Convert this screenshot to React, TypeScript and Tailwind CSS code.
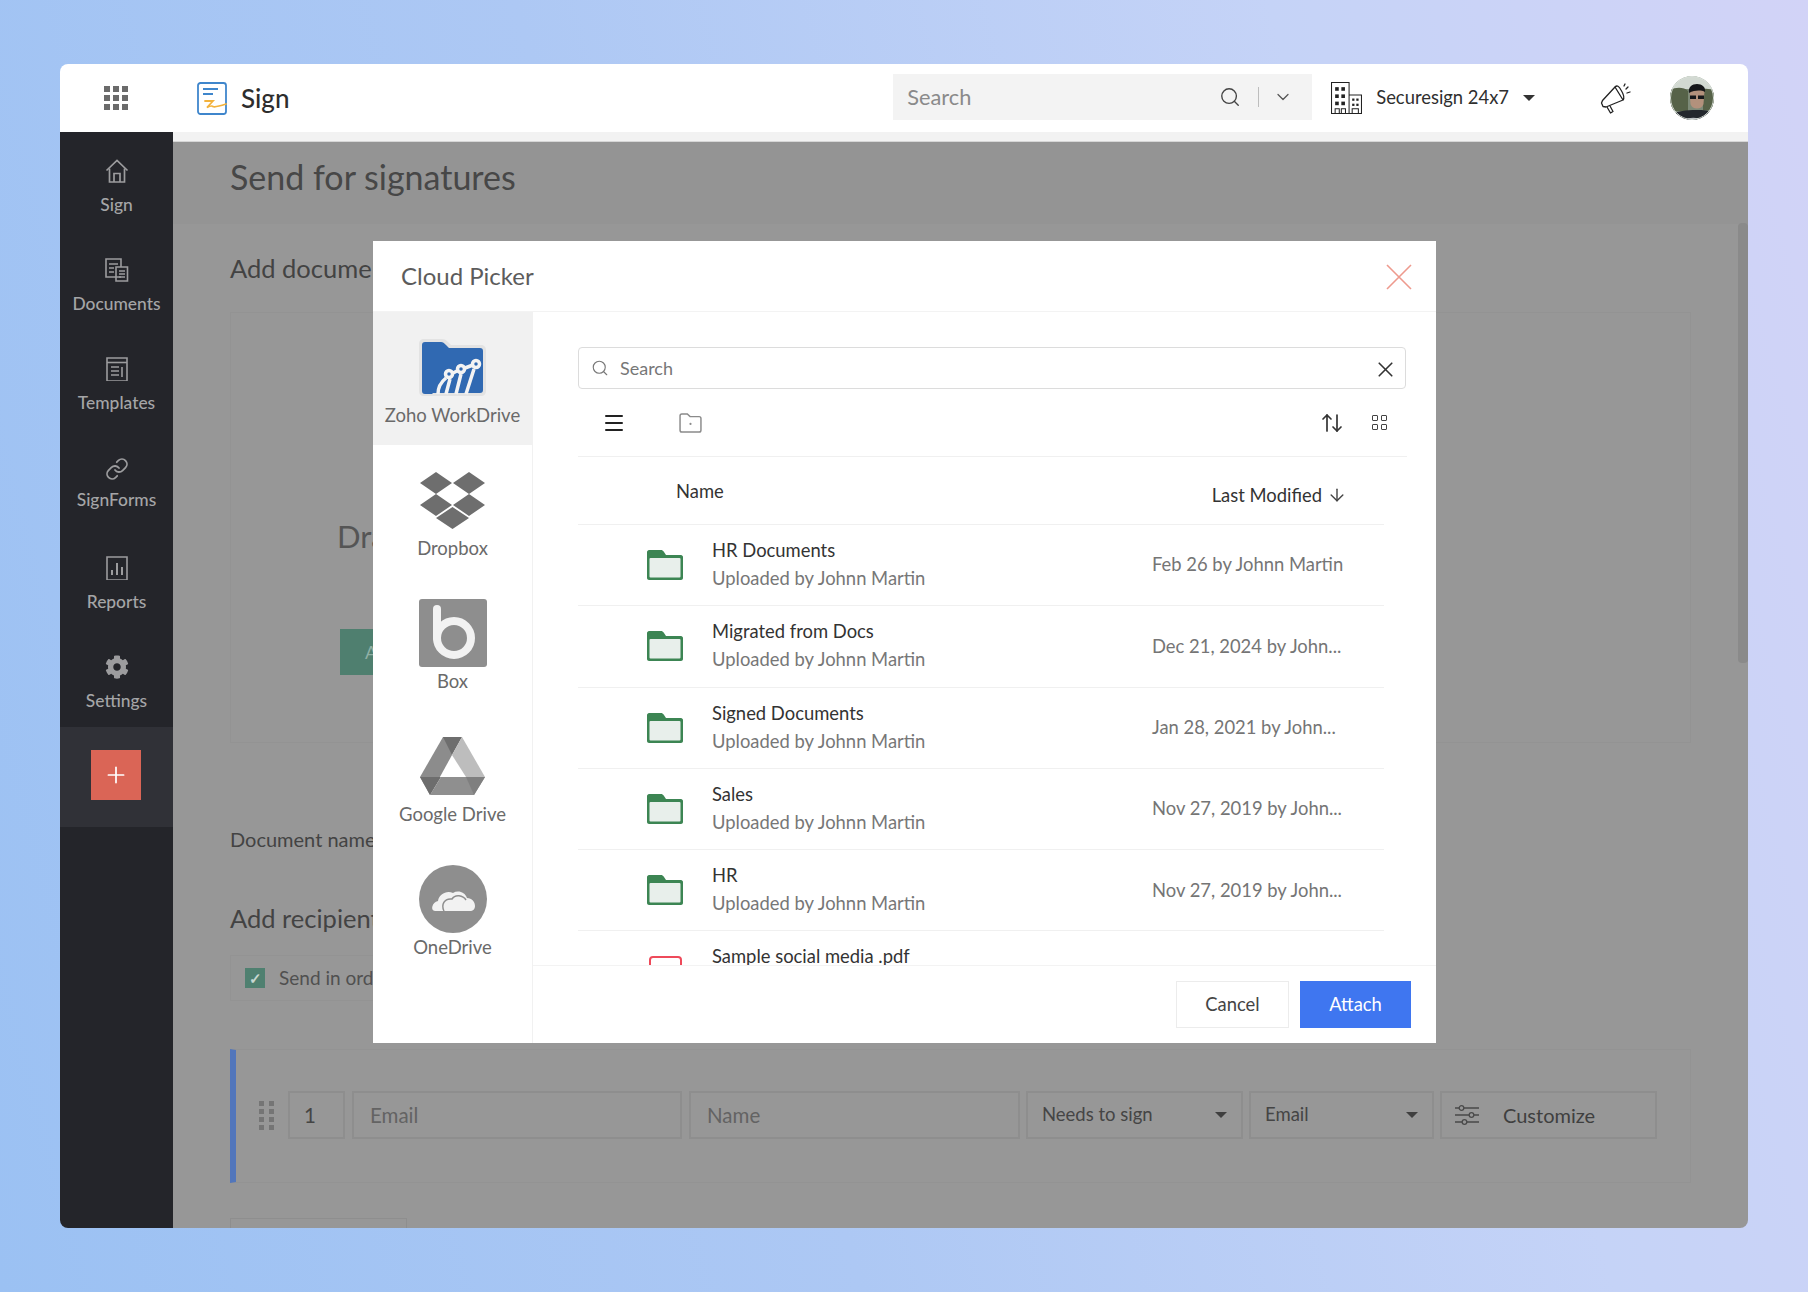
import { ChevronDown, Link, Search, X, Menu, ArrowUpDown, ArrowDown, Plus } from "lucide-react";
import { FaCog } from "react-icons/fa";

const sideIcon = "h-6 w-6 text-[#9c9c9e]";

function HomeIcon() {
  return (
    <svg viewBox="0 0 24 24" fill="none" stroke="currentColor" strokeWidth="1.7" className={sideIcon}>
      <path d="M1.500 11.500 12 1.500l10.500 10" />
      <path d="M4.500 9.500V23h15V9.500" />
      <path d="M9 23v-8.500h6V23" />
    </svg>
  );
}

function DocsIcon() {
  return (
    <svg viewBox="0 0 24 24" fill="none" stroke="currentColor" strokeWidth="1.600" className={sideIcon}>
      <path d="M16 19H1V1h15v8" />
      <path d="M11 9h11.500v14H11z" />
      <path d="M4 6h9M4 10h5M4 14h5M14 13h6M14 16h6M14 19h6" />
    </svg>
  );
}

function TemplateIcon() {
  return (
    <svg viewBox="0 0 24 24" fill="none" stroke="currentColor" strokeWidth="1.600" className={sideIcon}>
      <path d="M2 1h20v23H2z" />
      <path d="M2 5.500h20" />
      <path d="M6 10h8M6 14h8M6 18h8M17 10v10" />
    </svg>
  );
}

function ReportIcon() {
  return (
    <svg viewBox="0 0 24 24" fill="none" stroke="currentColor" strokeWidth="1.600" className={sideIcon}>
      <path d="M2 1h20v23H2z" />
      <path d="M7 19v-5M12 19V7M17 19v-8" strokeWidth="2" />
    </svg>
  );
}

function SignLogo() {
  return (
    <svg viewBox="0 0 30 33" className="h-[33px] w-[30px]" fill="none">
      <rect x="1" y="1" width="28" height="31" rx="2.500" stroke="#3f86cc" strokeWidth="1.800" fill="#fff" />
      <path d="M6 7h15M6 12h10" stroke="#3f86cc" strokeWidth="1.800" />
      <path d="M8 19h8l-6 6.500c3-1.500 5-2 6-1 2 1 7-.5 13-2.500" stroke="#f3b23c" strokeWidth="1.800" strokeLinecap="round" />
    </svg>
  );
}

function BuildingIcon() {
  return (
    <svg viewBox="0 0 30 31" className="h-[32px] w-[31px]" fill="none" stroke="#222" strokeWidth="1">
      <path d="M.5.500h17v30H.500zM17.500 12.500h12v18h-12zM0 30.500h30" />
      <path d="M4 26h4v4.500H4zM10 26h4v4.500h-4zM20.500 26h6v4.500h-6z" />
      <g fill="#222" stroke="none">
        <rect x="4" y="5" width="3.500" height="3.500" />
        <rect x="10" y="5" width="3.500" height="3.500" />
        <rect x="4" y="12" width="3.500" height="3.500" />
        <rect x="10" y="12" width="3.500" height="3.500" />
        <rect x="4" y="19" width="3.500" height="3.500" />
        <rect x="10" y="19" width="3.500" height="3.500" />
        <rect x="20.500" y="16" width="2.200" height="2.200" />
        <rect x="24.500" y="16" width="2.200" height="2.200" />
        <rect x="20.500" y="21" width="2.200" height="2.200" />
        <rect x="24.500" y="21" width="2.200" height="2.200" />
      </g>
    </svg>
  );
}

function MegaphoneIcon() {
  return (
    <svg viewBox="0 0 31 31" className="h-[31px] w-[31px]" fill="none" stroke="#222" strokeWidth="1.300" strokeLinejoin="round">
      <path d="M15 4 23 17 6 24l-3-.5L1.500 20l1-2.500z" />
      <path d="M15 4c2-2 4-1 6 3 2.500 4 3.500 8 2 10" />
      <path d="m7 24 3.500 6 2.500-1.500-3-5.500" />
      <path d="m26 6 2-2M27 10l3-1M24 3l1-2" strokeLinecap="round" />
    </svg>
  );
}

function Avatar() {
  return (
    <svg viewBox="0 0 44 44" className="h-11 w-11 rounded-full">
      <rect width="44" height="44" fill="#7d8a78" />
      <rect width="44" height="13" fill="#d2d9d2" />
      <path d="M0 14c6-3 14-3 18 1v20H0zM33 13c4-1 8 0 11 3v18H33z" fill="#566248" />
      <path d="M3 44v-6c5-3 12-4 24-4s14 1 17 4v6z" fill="#23272d" />
      <path d="M15 44c2-3 14-3 18 0z" fill="#b9bec2" />
      <path d="M19.500 15c0-4 4-6 7.500-6s7.500 2 7.500 6l-1 13c-1.500 6-11.500 6-13 0z" fill="#b3917c" />
      <path d="M19 17c-1-6 3-9 8-9s9 3 8 8c-4-2-10-2-16 1z" fill="#15171a" />
      <path d="M20 19.500h6V23h-6zM28 19.500h6V23h-6z" fill="#16181b" />
      <circle cx="22" cy="22" r="21.500" fill="none" stroke="#d9dfd9" strokeWidth="1" />
    </svg>
  );
}

function WorkDriveIcon() {
  return (
    <svg viewBox="0 0 67 57" className="h-[57px] w-[67px]">
      <path d="M5 0h18c3 0 4 1 6 3l3 3h30c3 0 5 2 5 5v41c0 3-2 5-5 5H5c-3 0-5-2-5-5V5c0-3 2-5 5-5z" fill="#e3e3e3" />
      <path d="M6 3h16c2 0 3 1 5 3l3 3h31c2 0 3 1 3 3v39c0 2-1 3-3 3H14l-1 1H6c-2 0-3-1-3-3V6c0-2 1-3 3-3z" fill="#3069b2" />
      <g fill="none" stroke="#f3f3f3" strokeWidth="3.500">
        <circle cx="30" cy="35" r="3.500" />
        <circle cx="42" cy="30" r="3.500" />
        <circle cx="57" cy="25" r="3.500" />
        <path d="M19 55c0-7 3-12 8-16M31 40l-4 15M42 35l-5 20M55 30l-8 25M34 34l5-2.500M46 29l8-3" />
      </g>
    </svg>
  );
}

function DropboxIcon() {
  return (
    <svg viewBox="0 0 65 57" className="h-[57px] w-[65px]" fill="#6e6e6e">
      <path d="M0 11 16 0l16 11-16 11zM33 11 49 0l16 11-16 11zM0 33l16-11 16 11-16 11zM33 33l16-11 16 11-16 11zM16 46l16.500-11L49 46 32.500 57z" />
    </svg>
  );
}

function BoxIcon() {
  return (
    <svg viewBox="0 0 68 68" className="h-[68px] w-[68px]">
      <rect width="68" height="68" rx="3" fill="#8e8e8e" />
      <g fill="none" stroke="#f2f2f2" strokeWidth="8" strokeLinecap="round">
        <path d="M18 10v29" />
        <circle cx="35" cy="39" r="17" />
      </g>
    </svg>
  );
}

function DriveIcon() {
  return (
    <svg viewBox="0 0 65 58" className="h-[58px] w-[65px]">
      <path d="M23 0h19l-10 18-9-3z" fill="#6e6e6e" />
      <path d="M42 0l23 40H46L32 18z" fill="#bdbdbd" />
      <path d="M23 0 0 40l10 18 22-40z" fill="#8c8c8c" />
      <path d="M0 40h21L10 58z" fill="#6d6d6d" />
      <path d="M21 40h44L54 58H10z" fill="#8f8f8f" />
      <path d="M46 40h19l-11 18-8-18z" fill="#7f7f7f" />
    </svg>
  );
}

function OneDriveIcon() {
  return (
    <svg viewBox="0 0 68 68" className="h-[68px] w-[68px]">
      <circle cx="34" cy="34" r="34" fill="#8e8e8e" />
      <path d="M16 46c-5 0-3-9 3-10 1-7 9-11 15-8 5-3 12-1 14 5 5 0 8 4 8 8 0 3-2 5-5 5z" fill="#f2f2f2" />
      <path d="M25 46c-3-6 0-13 8-12 3-5 11-4 14 1" fill="none" stroke="#8e8e8e" strokeWidth="1.500" />
    </svg>
  );
}

function FolderIcon() {
  return (
    <svg viewBox="0 0 36 30" className="h-[30px] w-[36px]">
      <path d="M2 0h12c1 0 2 .5 3 2l2 3h15c1 0 2 1 2 2v21c0 1-1 2-2 2H2c-1 0-2-1-2-2V2C0 1 1 0 2 0z" fill="#3c8553" />
      <rect x="2.500" y="8" width="31" height="19.500" rx="1" fill="#e8efeb" />
    </svg>
  );
}

const sideItems = [
  { label: "Sign", icon: <HomeIcon /> },
  { label: "Documents", icon: <DocsIcon /> },
  { label: "Templates", icon: <TemplateIcon /> },
  { label: "SignForms", icon: <Link className={sideIcon} strokeWidth={1.8} />, textClass: "mt-[9px]" },
  { label: "Reports", icon: <ReportIcon /> },
  { label: "Settings", icon: <FaCog className={sideIcon} /> },
];

const providers = [
  { label: "Zoho WorkDrive", icon: <WorkDriveIcon />, active: true },
  { label: "Dropbox", icon: <DropboxIcon /> },
  { label: "Box", icon: <BoxIcon /> },
  { label: "Google Drive", icon: <DriveIcon /> },
  { label: "OneDrive", icon: <OneDriveIcon /> },
];

const files = [
  { name: "HR Documents", date: "Feb 26 by Johnn Martin" },
  { name: "Migrated from Docs", date: "Dec 21, 2024 by John..." },
  { name: "Signed Documents", date: "Jan 28, 2021 by John..." },
  { name: "Sales", date: "Nov 27, 2019 by John..." },
  { name: "HR", date: "Nov 27, 2019 by John..." },
];

function Caret({ className }: { className?: string }) {
  return <span className={`h-0 w-0 border-x-[6px] border-t-[6px] border-x-transparent ${className ?? ""}`} />;
}

export default function App() {
  return (
    <div className="h-[1292px] w-[1808px] overflow-hidden bg-[linear-gradient(75deg,#9bc1f3_0%,#adc8f4_40%,#c5d3f7_75%,#d2d3f7_100%)] pl-[60px] pt-[64px] font-['Lato','Liberation_Sans',sans-serif]">
      <div className="relative flex h-[1164px] w-[1688px] flex-col overflow-hidden rounded-lg">
        {/* Top bar */}
        <header className="flex h-[68px] shrink-0 items-center bg-white pr-[34px]">
          <div className="flex w-[111px] justify-center">
            <div className="grid grid-cols-3 gap-[3px]">
              {Array.from({ length: 9 }).map((_, i) => (
                <span key={i} className="h-[6px] w-[6px] bg-[#6b6b6b]" />
              ))}
            </div>
          </div>
          <div className="ml-[26px] flex items-center gap-[14px]">
            <SignLogo />
            <span className="text-[26px] font-medium leading-none text-[#2d2d2d]">Sign</span>
          </div>
          <div className="ml-auto flex h-[46px] w-[419px] -translate-y-[1px] items-center bg-[#f3f3f3] pl-[14px] pr-[19px] text-[21.800px] text-[#8a8a8a]">
            <span className="flex-1">Search</span>
            <Search className="h-[22px] w-[22px] text-[#444]" strokeWidth={1.5} />
            <span className="ml-[17px] h-[20px] w-px bg-[#bdbdbd]" />
            <ChevronDown className="ml-[14px] h-[20px] w-[20px] text-[#555]" strokeWidth={1.5} />
          </div>
          <div className="ml-[19px] flex items-center">
            <BuildingIcon />
            <span className="ml-[14px] text-[18.400px] text-[#2f2f2f]">Securesign 24x7</span>
            <Caret className="ml-[14px] border-t-[#333]" />
          </div>
          <div className="ml-[65px] flex items-center">
            <MegaphoneIcon />
          </div>
          <div className="ml-[39px]">
            <Avatar />
          </div>
        </header>

        <div className="flex min-h-0 flex-1">
          {/* Sidebar */}
          <aside className="w-[113px] shrink-0 bg-[#24252a]">
            {sideItems.map((item) => (
              <div key={item.label} className="flex h-[99.2px] flex-col items-center pt-[27px]">
                {item.icon}
                <span className={`${item.textClass ?? "mt-[12px]"} text-[17.400px] font-medium leading-[20px] text-[#a5a5a7]`}>{item.label}</span>
              </div>
            ))}
            <div className="flex h-[100px] items-center justify-center bg-[#303137] pb-[4px] pr-[1px]">
              <div className="flex h-[50px] w-[50px] items-center justify-center bg-[#da6556]">
                <Plus className="h-[26px] w-[26px] text-white" strokeWidth={1.6} />
              </div>
            </div>
          </aside>

          {/* Page behind the dialog */}
          <main className="relative flex min-w-0 flex-1 flex-col overflow-hidden bg-[#979797]">
            <div className="h-[10px] shrink-0 border-b border-[#d6d6d6] bg-[#f2f2f2]" />
            <div className="h-[82px] shrink-0 bg-[#949494] px-[57px] pt-[13px]">
              <h1 className="text-[34px] leading-[44px] text-[#474747]">Send for signatures</h1>
            </div>
            <div className="flex-1 px-[57px] pt-[28px]">
              <h2 className="text-[25.500px] leading-[32px] text-[#434343]">Add documents</h2>
              <div className="mt-[28px] h-[431px] border border-[#939393] pl-[106px] pt-[203px]">
                <p className="text-[31px] leading-[40px] text-[#555]">Drag and drop files</p>
                <div className="ml-[3px] mt-[73px] flex h-[46px] w-[120px] items-center bg-[#4f7f6f] pl-[25px] text-[18px] text-[#8fb0a5]">
                  Add
                </div>
              </div>
              <p className="mt-[84px] text-[20px] leading-[24px] text-[#434343]">Document name</p>
              <h2 className="mt-[51px] text-[25.500px] leading-[32px] text-[#434343]">Add recipients</h2>
              <div className="mt-[21px] flex h-[46px] w-[400px] items-center border border-[#939393] pl-[14px]">
                <span className="flex h-[20px] w-[20px] items-center justify-center bg-[#4f8070] text-[15px] font-bold leading-none text-[#c8d8d2]">✓</span>
                <span className="ml-[14px] text-[19px] text-[#505050]">Send in order</span>
              </div>
              <div className="mt-[48px] flex h-[134px] items-center border border-l-[6px] border-[#939393] border-l-[#5276bb] pb-[2px] pl-[23px] text-[20.500px]">
                <div className="grid grid-cols-2 gap-x-[5px] gap-y-[3px]">
                  {Array.from({ length: 8 }).map((_, i) => (
                    <span key={i} className="h-[5px] w-[5px] bg-[#757575]" />
                  ))}
                </div>
                <div className="ml-[14px] flex h-[48px] w-[57px] items-center border-2 border-[#8e8e8e] pl-[14px] text-[#454545]">1</div>
                <div className="ml-[7px] flex h-[48px] w-[330px] items-center border-2 border-[#8e8e8e] pl-[16px] text-[#636363]">Email</div>
                <div className="ml-[7px] flex h-[48px] w-[331px] items-center border-2 border-[#8e8e8e] pl-[16px] text-[#636363]">Name</div>
                <div className="ml-[6px] flex h-[48px] w-[217px] items-center justify-between border-2 border-[#8e8e8e] pl-[14px] pr-[14px] text-[18.500px] text-[#454545]">
                  Needs to sign
                  <Caret className="border-t-[#3f3f3f]" />
                </div>
                <div className="ml-[6px] flex h-[48px] w-[185px] items-center justify-between border-2 border-[#8e8e8e] pl-[14px] pr-[14px] text-[18.500px] text-[#454545]">
                  Email
                  <Caret className="border-t-[#3f3f3f]" />
                </div>
                <div className="ml-[6px] flex h-[48px] w-[217px] items-center border-2 border-[#8e8e8e] pl-[13px] text-[20px] text-[#3f3f3f]">
                  <svg viewBox="0 0 24 20" className="h-[20px] w-[24px]" fill="none" stroke="#4a4a4a" strokeWidth="1.300">
                    <path d="M0 3h4M9 3h15M0 10h14M19 10h5M0 17h7M12 17h12" />
                    <circle cx="6.500" cy="3" r="2.300" />
                    <circle cx="16.500" cy="10" r="2.300" />
                    <circle cx="9.500" cy="17" r="2.300" />
                  </svg>
                  <span className="ml-[24px]">Customize</span>
                </div>
              </div>
              <div className="mt-[35px] h-[40px] w-[177px] border border-[#8e8e8e]" />
            </div>
            <span className="absolute right-0 top-[91px] h-[440px] w-[10px] rounded-sm bg-[#8a8a8a]" />
          </main>
        </div>

        {/* Cloud Picker dialog */}
        <div className="absolute left-[313px] top-[177px] flex h-[802px] w-[1063px] flex-col bg-white">
          <div className="flex h-[71px] shrink-0 items-center justify-between border-b border-[#f3f3f3] pl-[28px] pr-[24px]">
            <span className="text-[24px] text-[#5c5c5c]">Cloud Picker</span>
            <svg viewBox="0 0 26 26" className="h-[26px] w-[26px] translate-y-[1px]" stroke="#ee9a8e" strokeWidth="1.600">
              <path d="M1 1l24 24M25 1 1 25" />
            </svg>
          </div>
          <div className="flex min-h-0 flex-1">
            <div className="w-[160px] shrink-0 border-r border-[#f1f1f1]">
              {providers.map((p) => (
                <div
                  key={p.label}
                  className={`flex h-[133px] flex-col items-center pt-[21px] text-[18.500px] leading-[24px] text-[#6a6a6a] ${p.active ? "bg-[#f1f1f1]" : ""}`}
                >
                  <div className="flex h-[68px] items-center">{p.icon}</div>
                  <span className="mt-[2px]">{p.label}</span>
                </div>
              ))}
            </div>
            <div className="flex min-w-0 flex-1 flex-col">
              <div className="flex min-h-0 flex-1 flex-col overflow-hidden pl-[45px] pt-[35px]">
                <div className="flex h-[42px] w-[828px] shrink-0 items-center rounded border border-[#dcdcdc] pl-[12px] pr-[7px]">
                  <Search className="h-[18px] w-[18px] text-[#777]" strokeWidth={1.5} />
                  <span className="ml-[11px] flex-1 text-[18px] text-[#777]">Search</span>
                  <X className="h-[25px] w-[25px] translate-y-[1px] text-[#333]" strokeWidth={1.6} />
                </div>
                <div className="flex h-[68px] w-[829px] shrink-0 items-center border-b border-[#f0f0f0] pl-[24px] pr-[20px]">
                  <Menu className="h-[24px] w-[24px] text-[#222]" strokeWidth={2} />
                  <svg viewBox="0 0 25 22" className="ml-[53px] h-[20px] w-[23px]" fill="none" stroke="#8a8a8a" strokeWidth="1.600">
                    <path d="M1 3c0-1 1-2 2-2h6l3 3h10c1 0 2 1 2 2v13c0 1-1 2-2 2H3c-1 0-2-1-2-2z" />
                    <circle cx="12.500" cy="12" r="1.200" fill="#8a8a8a" stroke="none" />
                  </svg>
                  <ArrowUpDown className="ml-auto h-[24px] w-[24px] text-[#333]" strokeWidth={1.7} />
                  <div className="ml-[28px] grid grid-cols-2 gap-[3px]">
                    {Array.from({ length: 4 }).map((_, i) => (
                      <span key={i} className="h-[6px] w-[6px] rounded-[1px] border border-[#444]" />
                    ))}
                  </div>
                </div>
                <div className="flex h-[68px] w-[806px] shrink-0 items-center border-b border-[#f0f0f0] text-[18.400px] text-[#333]">
                  <span className="ml-[98px] translate-y-[1px]">Name</span>
                  <span className="ml-auto mr-[37px] flex translate-y-[5px] items-center gap-[5px]">
                    Last Modified
                    <ArrowDown className="h-[20px] w-[20px] text-[#444]" strokeWidth={1.7} />
                  </span>
                </div>
                {files.map((f) => (
                  <div key={f.name} className="flex h-[81.300px] w-[806px] shrink-0 items-center border-b border-[#f0f0f0] pl-[69px]">
                    <FolderIcon />
                    <div className="ml-[29px] flex-1 -translate-y-[1px] text-[18.400px] leading-[24px]">
                      <div className="text-[#333]">{f.name}</div>
                      <div className="mt-[4px] text-[#777]">Uploaded by Johnn Martin</div>
                    </div>
                    <span className="w-[232px] text-[18.400px] text-[#757575]">{f.date}</span>
                  </div>
                ))}
                <div className="flex h-[81px] w-[806px] shrink-0 items-start pl-[71px] pt-[13px]">
                  <div className="mt-[12px] h-[30px] w-[33px] rounded-[4px] border-2 border-[#ee4a5a]" />
                  <div className="ml-[30px] flex-1 text-[18.400px] leading-[24px] text-[#333]">Sample social media .pdf</div>
                  <span className="mt-[27px] w-[232px] text-[18.400px] text-[#757575]">Mar 19, 2024 by John...</span>
                </div>
              </div>
              <div className="flex h-[78px] shrink-0 items-start justify-end gap-[11px] border-t border-[#f3f3f3] pr-[25px] pt-[15px] text-[18.400px]">
                <button className="h-[47px] w-[113px] border border-[#ececec] text-[#444]">Cancel</button>
                <button className="h-[47px] w-[111px] bg-[#3f76f0] text-white">Attach</button>
              </div>
            </div>
          </div>
        </div>
      </div>
    </div>
  );
}
